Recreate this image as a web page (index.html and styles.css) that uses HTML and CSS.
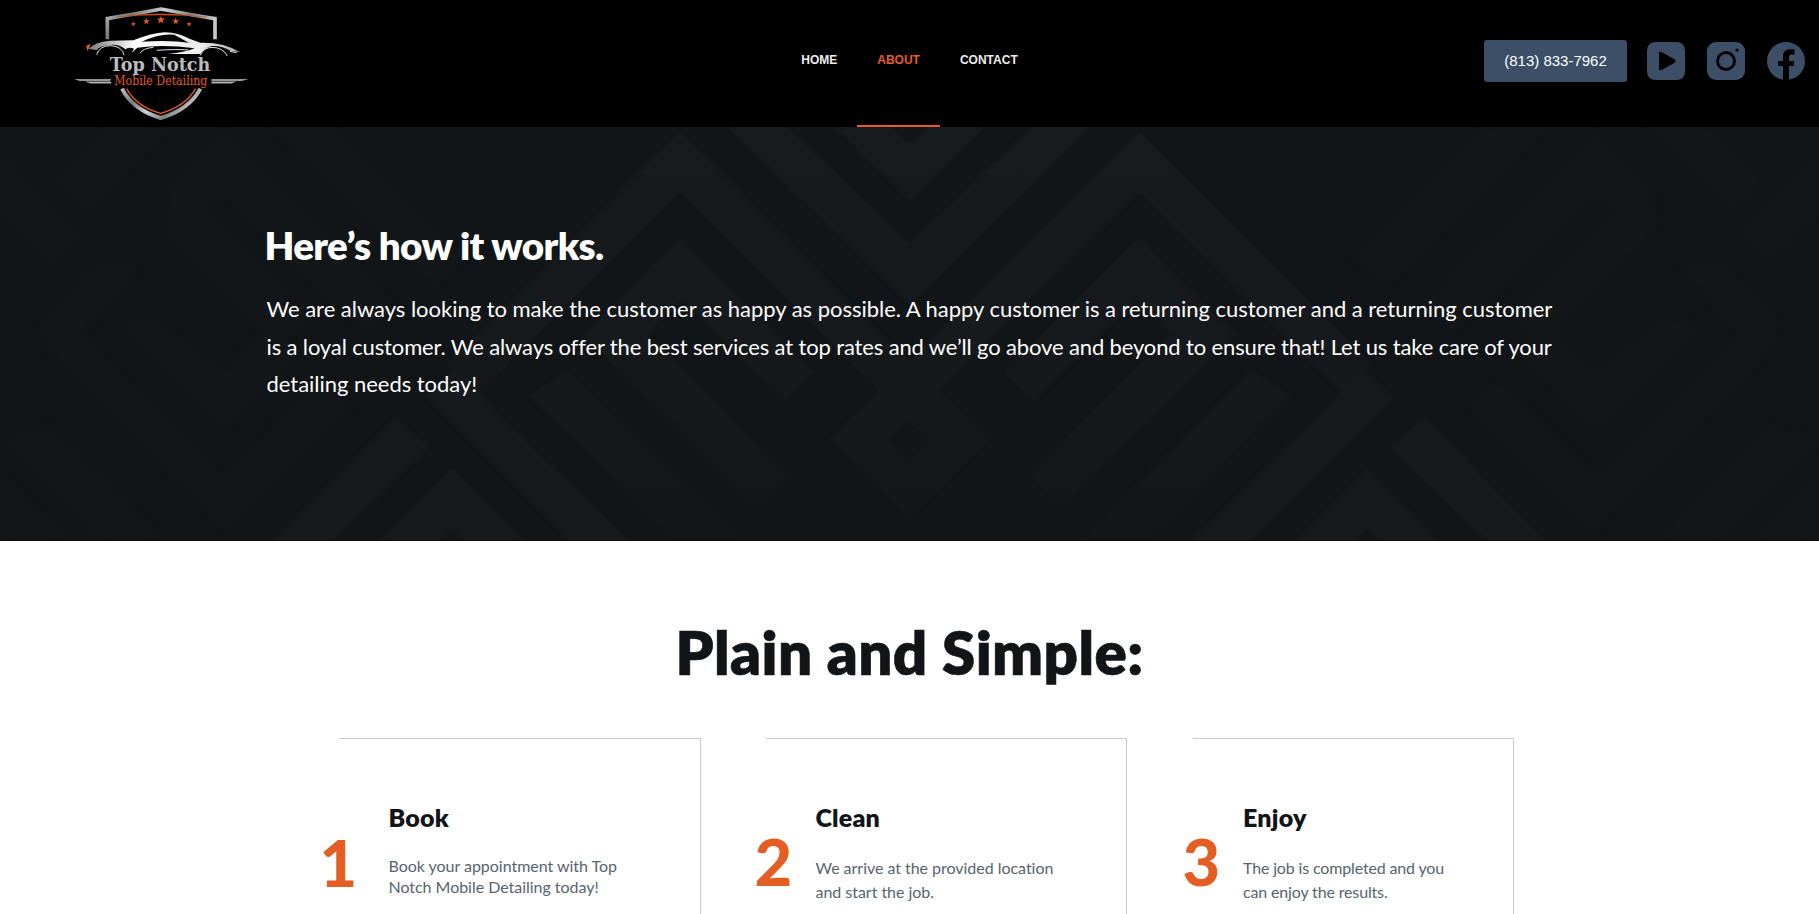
FILE: index.html
```html
<!DOCTYPE html>
<html lang="en">
<head>
<meta charset="utf-8">
<title>About - Top Notch Mobile Detailing</title>
<link rel="stylesheet" href="styles.css">
</head>
<body>
<header class="header">
  <a class="logo">
    <svg width="200" height="127" viewBox="0 0 600 381">
      <defs>
        <linearGradient id="silver" x1="0" y1="0" x2="1" y2="0.3">
          <stop offset="0" stop-color="#b9bbbd"/><stop offset=".25" stop-color="#77797b"/><stop offset=".5" stop-color="#d0d2d3"/><stop offset=".75" stop-color="#808284"/><stop offset="1" stop-color="#c5c7c8"/>
        </linearGradient>
        <linearGradient id="car" x1="0" y1="0" x2="1" y2="0">
          <stop offset="0" stop-color="#777"/><stop offset=".3" stop-color="#fff"/><stop offset=".75" stop-color="#eee"/><stop offset="1" stop-color="#aaa"/>
        </linearGradient>
        <path id="star" d="M0-13 3.2-4.2 12.500-4 5.200 1.700 7.700 10.600 0 5.400-7.700 10.600-5.200 1.700-12.500-4-3.200-4.200Z" fill="#e35b25"/>
      </defs>
      <path d="M142 118V56Q225 42 303 27Q390 44 465 56V118" fill="none" stroke="url(#silver)" stroke-width="11"/>
      <path d="M168 51Q300 31 442 52Q300 39 168 51Z" fill="#c64c1d" stroke="#c64c1d"/>
      <path d="M186 266Q218 329 302 354Q388 329 421 266" fill="none" stroke="url(#silver)" stroke-width="12"/>
      <path d="M200 266Q230 321 302 340Q374 321 407 266" fill="none" stroke="#e35b25" stroke-width="4"/>
      <use href="#star" transform="translate(303 60)"/>
      <use href="#star" transform="translate(259 64) scale(.8)"/>
      <use href="#star" transform="translate(347 64) scale(.8)"/>
      <use href="#star" transform="translate(220 72) scale(.62)"/>
      <use href="#star" transform="translate(387 72) scale(.62)"/>
      <path d="M79 137 91 132 88 144 82 153Z" fill="#e35b25"/>
      <path d="M86 147Q103 126 150 122L220 121Q275 99 315 97Q355 98 388 116L421 128Q490 126 540 156L512 153Q484 136 456 138Q431 145 421 162H325Q373 158 404 145Q310 132 232 143L214 160 222 146Q206 140 196 148Q176 132 150 135Q122 136 110 150Z" fill="url(#car)"/>
      <path d="M245 125Q300 99 344 104L392 129Q330 119 245 125Z" fill="#050505"/>
      <path d="M342 102 395 132 405 144M240 160Q248 145 280 142M110 164Q120 136 152 137Q188 139 192 166M421 166Q430 142 459 142Q490 144 502 168M510 154 530 158M290 151Q350 147 385 150" fill="none" stroke="#e5e5e5" stroke-width="3"/>
      <path d="M45 238H153L150 242H60ZM78 245H153V250H92ZM455 238H562L545 242H455ZM455 245H527L514 250H455Z" fill="#b5b7b8" stroke="#b5b7b8"/>
      <text class="logo-name" x="149" y="213" textLength="302" lengthAdjust="spacingAndGlyphs">Top Notch</text>
      <text class="logo-sub" x="163" y="255" textLength="279" lengthAdjust="spacingAndGlyphs">Mobile Detailing</text>
    </svg>
  </a>
  <nav class="nav">
    <a class="nav-item">HOME</a>
    <a class="nav-item nav-active">ABOUT</a>
    <a class="nav-item">CONTACT</a>
  </nav>
  <div class="actions">
    <a class="phone">(813) 833-7962</a>
    <svg class="social" viewBox="0 0 38 38"><path fill-rule="evenodd" d="M9 0H29Q38 0 38 9V29Q38 38 29 38H9Q0 38 0 29V9Q0 0 9 0ZM12 11V27Q12.500 29 14.500 28L28 20.500Q29.500 19 28 17.500L14.500 10Q12.500 9 12 11Z"/></svg>
    <svg class="social" viewBox="0 0 38 38"><rect width="38" height="38" rx="9"/><circle cx="19" cy="19" r="8.500" fill="none" stroke="#000" stroke-width="2.800"/><circle cx="30" cy="8" r="1.600" fill="#000"/></svg>
    <svg class="social" viewBox="0 0 38 38"><circle cx="19" cy="19" r="19"/><path fill="#000" d="M16 38V24H11V19H16V15Q16 7.300 23 7.300H27.500V12.400H24.500Q22 12.400 22 15V19H27.300L26.500 24H22V38Z"/></svg>
  </div>
</header>

<section class="hero">
  <svg class="hero-pattern" viewBox="0 0 1819 414" preserveAspectRatio="none">
    <defs>
      <linearGradient id="fade" gradientUnits="userSpaceOnUse" x1="0" y1="0" x2="0" y2="414">
        <stop offset="0" stop-color="#181b1e"/><stop offset=".5" stop-color="#161a1d"/><stop offset="1" stop-color="#13171a"/>
      </linearGradient>
      <g id="half">
        <g fill="url(#fade)">
          <path d="M680 5 910 235V295L680 65 508 237 478 267 448 237Z"/>
          <path d="M680 111 815 246 785 276 682 173 648 207 790 349 757 383 583 209Z"/>
          <path d="M568 243 740 414H672L528 270Z"/>
          <path d="M728 0H788L910 117V179Z"/>
          <path d="M835 0H892L910 18V75Z"/>
          <path d="M910 235V295L890 313 910 335V395L828 313Z"/>
        </g>
        <g fill="#171a1d">
          <path d="M484 273 628 414H568L455 301 425 271 455 241Z"/>
          <path d="M395 291 430 321 333 414H273Z"/>
          <path d="M452 342 524 414H463L452 403 441 414H380Z"/>
        </g>
        <g class="pattern-faint" fill="#14181b">
          <path d="M223 5 395 177 365 207 223 68 203 83 310 190 280 220 165 105 168 60Z"/>
          <path d="M270 0H333L465 132 435 162Z"/>
          <path d="M108 0H173L85 85 55 53Z"/>
          <path d="M0 25 82 107 50 137 0 86Z"/>
          <path d="M95 138 140 140 80 208 223 350V402L50 225 40 195Z"/>
          <path d="M150 190 223 245 270 200 300 230 223 303 120 200Z"/>
          <path d="M50 300 165 414H100L0 314Z"/>
          <path d="M223 350 320 253 350 283 223 410Z"/>
          <path d="M0 345 69 414H8L0 406Z"/>
        </g>
      </g>
    </defs>
    <use href="#half"/>
    <use href="#half" transform="translate(1819) scale(-1 1)"/>
  </svg>
  <div class="hero-content">
    <h2 class="hero-title">Here’s how it works.</h2>
    <p class="hero-text"><span class="line-loose">We are always looking to make the customer as happy as possible. A happy customer is a returning customer and a returning customer</span><br><span class="line-tight">is a loyal customer. We always offer the best services at top rates and we’ll go above and beyond to ensure that! Let us take care of your</span><br>detailing needs today!</p>
  </div>
</section>

<section class="steps">
  <h1 class="steps-title">Plain and Simple:</h1>
  <div class="cards">
    <article class="card">
      <div class="number number-first">1</div>
      <div class="card-body">
        <h3 class="card-title">Book</h3>
        <p class="card-text card-text-tight">Book your appointment with Top<br>Notch Mobile Detailing today!</p>
      </div>
    </article>
    <article class="card">
      <div class="number">2</div>
      <div class="card-body">
        <h3 class="card-title">Clean</h3>
        <p class="card-text">We arrive at the provided location<br>and start the job.</p>
      </div>
    </article>
    <article class="card card-last">
      <div class="number">3</div>
      <div class="card-body">
        <h3 class="card-title">Enjoy</h3>
        <p class="card-text">The job is completed and you<br>can enjoy the results.</p>
      </div>
    </article>
  </div>
</section>
</body>
</html>
```
FILE: styles.css
```css
* { box-sizing: border-box; }
html, body { height: 100%; }
body {
  margin: 0;
  display: flex;
  flex-direction: column;
  overflow: hidden;
  background: #fff;
  color: #111518;
  font-family: Lato, sans-serif;
  font-variant-ligatures: none;
}
h1, h2, h3, p { margin: 0; }

.header {
  flex: none;
  display: grid;
  grid-template-columns: 1fr auto 1fr;
  height: 127px;
  background: #000;
  font-family: "Liberation Sans", Arial, sans-serif;
}
.logo { height: 127px; padding-left: 60px; }
.logo svg { display: block; }
.logo-name { font: bold 58px "DejaVu Serif", serif; fill: #b9bcbe; }
.logo-sub { font: 37px "DejaVu Serif", serif; fill: #e35b25; }
.nav { display: flex; }
.nav-item {
  padding: 52px 20px 0;
  border-bottom: 2px solid transparent;
  color: #eee;
  font-size: 12px;
  font-weight: 700;
  line-height: 16px;
}
.nav-active { color: #e45d25; border-color: #e45d25; }
.actions {
  display: flex;
  justify-content: flex-end;
  align-items: flex-start;
  gap: 22px;
  padding: 40px 14px 0 0;
}
.phone {
  width: 143px;
  height: 42px;
  margin-right: -2px;
  border-radius: 3px;
  background: #3c4f66;
  color: #fff;
  font-size: 15px;
  line-height: 42px;
  text-align: center;
}
.social { flex: none; width: 38px; height: 38px; margin-top: 2px; fill: #3c4f66; }

.hero {
  position: relative;
  flex: none;
  height: 414px;
  overflow: hidden;
  background: #111518;
  border-bottom: 1px solid #120c12;
}
.hero-pattern { position: absolute; inset: 0; width: 100%; height: 100%; filter: blur(1px); }
.pattern-faint { filter: blur(3px); opacity: .85; }
.hero-content { position: relative; width: 1290px; margin: 0 auto; padding-top: 94px; color: #fff; }
.hero-title { font-size: 38.5px; font-weight: 800; line-height: 48px; letter-spacing: -.6px; }
.hero-text { padding: 21px 0 0 2px; font-size: 22px; line-height: 37.5px; letter-spacing: -.03px; white-space: nowrap; }
.line-loose { letter-spacing: -.025px; }
.line-tight { letter-spacing: -.135px; }

.steps { flex: 1; min-height: 0; display: flex; flex-direction: column; width: 1280px; margin: 0 auto; padding-top: 75px; }
.steps-title { font-size: 60px; font-weight: 800; line-height: 72px; letter-spacing: .4px; text-align: center; -webkit-text-stroke: .6px #111518; }
.cards {
  flex: 1;
  min-height: 0;
  display: grid;
  grid-template-columns: 362px 361px 322px;
  column-gap: 65px;
  margin: 50px 0 0 69px;
}
.card {
  display: flex;
  border-top: 1px solid #c9cacb;
  border-right: 1px solid #c9cacb;
}
.card-last { margin-left: 1px; }
.number {
  flex: none;
  width: 60px;
  margin-left: -11px;
  margin-right: 1px;
  padding-top: 82px;
  color: #e45d22;
  font-size: 65px;
  font-weight: 900;
  line-height: 80px;
}
.number-first { margin-left: -19px; margin-right: 9px; padding-top: 83px; }
.card-last .number { margin-left: -10px; margin-right: 0; }
.card-body { padding-top: 62px; white-space: nowrap; }
.card-title { font-size: 25px; font-weight: 800; line-height: 32px; letter-spacing: .2px; }
.card-text { padding-top: 23px; color: #57646f; font-size: 16px; line-height: 24px; letter-spacing: -.03px; }
.card-last .card-text { letter-spacing: -.15px; }
.card-last .card-body { padding-left: .5px; }
.card-text-tight { padding-top: 22px; line-height: 21px; }
```
